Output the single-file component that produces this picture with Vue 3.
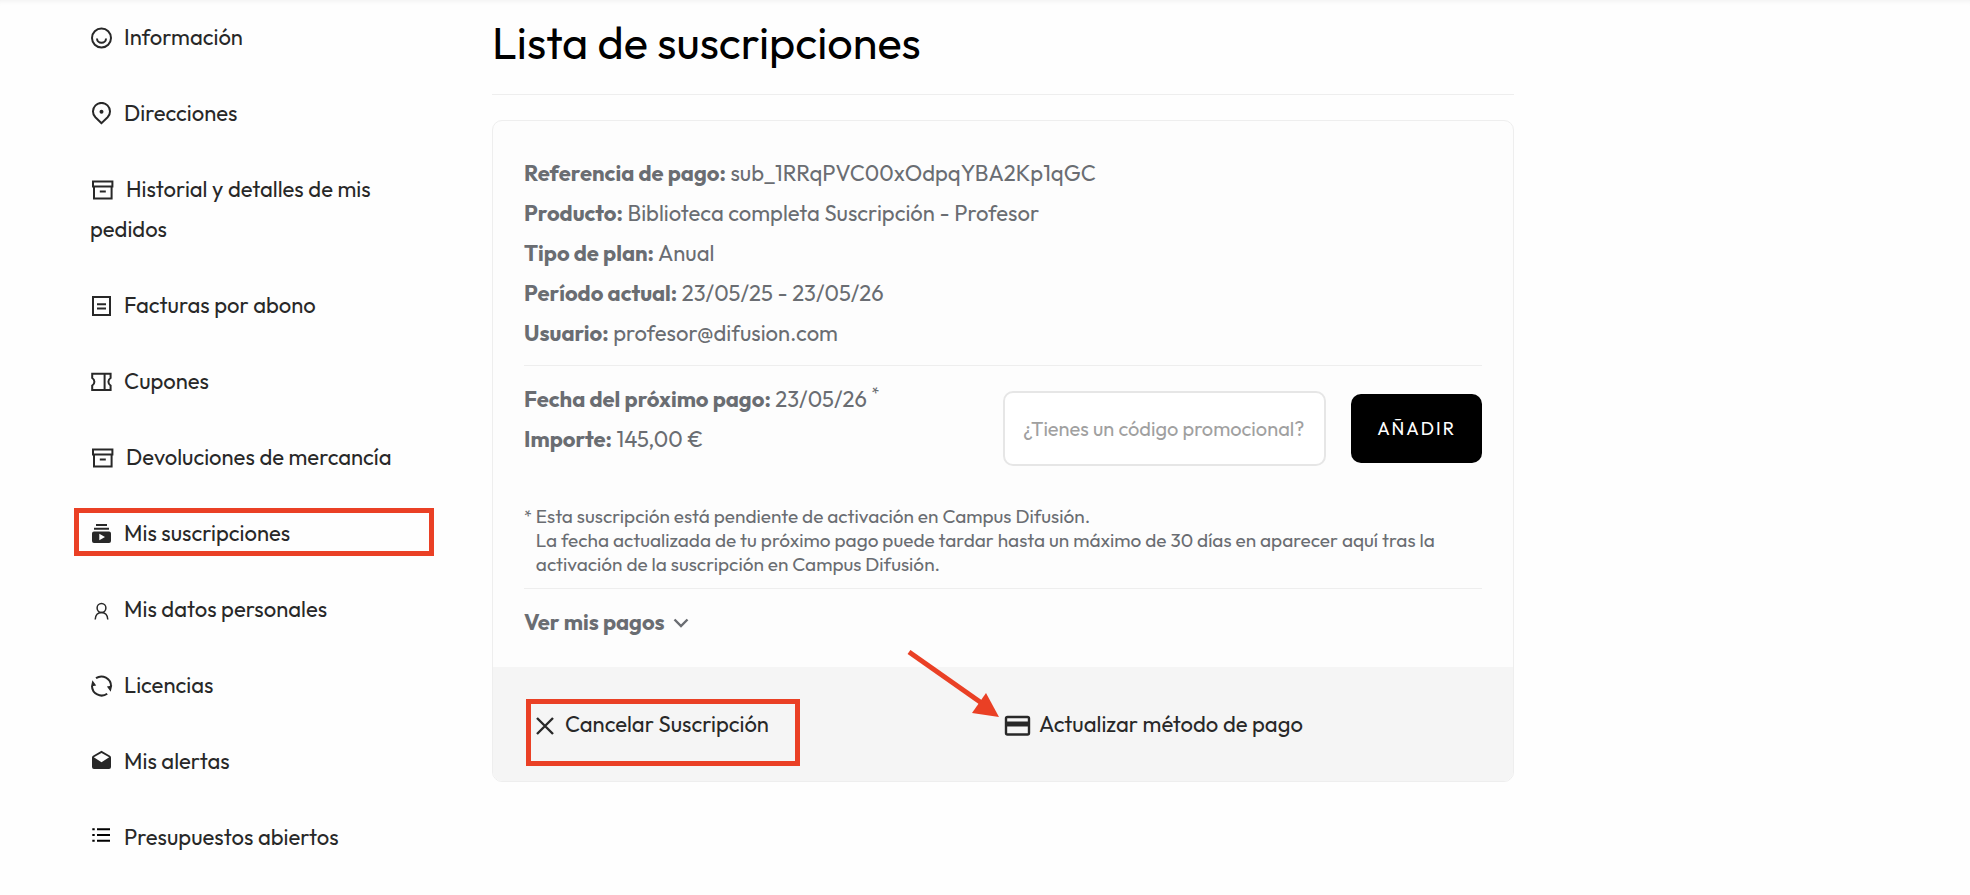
<script setup>
import { ref } from 'vue';

const promoCode = ref('');
const showPayments = ref(false);

const menu = [
  { icon: 'smile', label: 'Información' },
  { icon: 'pin', label: 'Direcciones' },
  { icon: 'box', label: 'Historial y detalles de mis pedidos' },
  { icon: 'invoice', label: 'Facturas por abono' },
  { icon: 'ticket', label: 'Cupones' },
  { icon: 'box', label: 'Devoluciones de mercancía' },
  { icon: 'subscriptions', label: 'Mis suscripciones', active: true },
  { icon: 'person', label: 'Mis datos personales' },
  { icon: 'refresh', label: 'Licencias' },
  { icon: 'mail', label: 'Mis alertas' },
  { icon: 'list', label: 'Presupuestos abiertos' }
];

const details = [
  { name: 'Referencia de pago', value: 'sub_1RRqPVC00xOdpqYBA2Kp1qGC' },
  { name: 'Producto', value: 'Biblioteca completa Suscripción - Profesor' },
  { name: 'Tipo de plan', value: 'Anual' },
  { name: 'Período actual', value: '23/05/25 - 23/05/26' },
  { name: 'Usuario', value: 'profesor@difusion.com' }
];

const addPromo = () => {
  promoCode.value = '';
};
</script>

<template>
  <div class="page">
    <nav class="sidebar" aria-label="Mi cuenta">
      <ul>
        <li v-for="item in menu" :key="item.label" :class="{ active: item.active }">
          <a href="#">
            <svg class="icon" :class="{ wide: item.icon === 'box' }" :viewBox="item.icon === 'box' ? '0 0 26 24' : '0 0 24 24'" fill="none" stroke="currentColor" stroke-width="2" aria-hidden="true">
              <g v-if="item.icon === 'smile'">
                <circle cx="11.5" cy="12" r="9.5" />
                <path d="M7 12.5a4.5 4.2 0 0 0 9 0" />
              </g>
              <g v-else-if="item.icon === 'pin'">
                <path d="M11.5 21.2 5.4 15.3A8.5 8.5 0 1 1 17.6 15.3Z" />
                <circle cx="11.5" cy="9.8" r="2" fill="currentColor" stroke="none" />
              </g>
              <g v-else-if="item.icon === 'box'">
                <path d="M3 3.5h19.4v5H3zM4 8.5v12h17.6v-12M9.8 13.5h6" />
              </g>
              <g v-else-if="item.icon === 'invoice'">
                <path d="M3 3h17v18H3zM7 10.2h9M7 14.4h9" />
              </g>
              <g v-else-if="item.icon === 'ticket'">
                <path d="M2.2 3.7h18.4V8a4.4 4.4 0 0 0 0 7.6v4.3H2.2v-4.3a4.4 4.4 0 0 0 0-7.6zM14.6 3.7v16.2" />
              </g>
              <g v-else-if="item.icon === 'subscriptions'" fill="currentColor" stroke="none">
                <path d="M6 2h11v2H6zM4 5.7h15v2H4z" />
                <path fill-rule="evenodd" d="M4 9.5h15a2 2 0 0 1 2 2V19a2 2 0 0 1-2 2H4a2 2 0 0 1-2-2v-7.5a2 2 0 0 1 2-2zM9.3 11.7v6.6l5.7-3.3z" />
              </g>
              <g v-else-if="item.icon === 'person'" stroke-width="1.5">
                <circle cx="11.5" cy="10" r="4.4" />
                <path d="M5.2 21.5c.3-4.5 2.8-7 6.3-7s6 2.5 6.3 7" />
              </g>
              <g v-else-if="item.icon === 'refresh'">
                <path d="M6 4.2a9.6 9.6 0 0 1 15 8M17.2 19.7A9.6 9.6 0 0 1 2 12" />
                <path fill="currentColor" stroke="none" d="M1 12.5 2.4 6.3 6.2 11.5zM22.2 11.5 20.7 17.7 16.9 12.5z" />
              </g>
              <g v-else-if="item.icon === 'mail'" fill="currentColor" stroke="none">
                <path fill-rule="evenodd" d="M11.5.8 20 5.8a2 2 0 0 1 1 1.7V17a2 2 0 0 1-2 2H4a2 2 0 0 1-2-2V7.5a2 2 0 0 1 1-1.7zM11.5 3 3.8 7.3l7.7 4.9 7.7-4.9z" />
              </g>
              <g v-else class="list-icon">
                <path d="M7 3.2h13M7 9h13M7 14.7h13M2.3 3.2h2.4M2.3 9h2.4M2.3 14.7h2.4" />
              </g>
            </svg>{{ item.label }}
          </a>
        </li>
      </ul>
    </nav>

    <main class="content">
      <h1>Lista de suscripciones</h1>

      <section class="card">
        <div class="card-body">
          <div class="block">
            <p v-for="row in details" :key="row.name"><strong>{{ row.name }}:</strong> {{ row.value }}</p>
          </div>

          <div class="block">
            <div class="columns">
              <div>
                <p><strong>Fecha del próximo pago:</strong> 23/05/26 <sup>*</sup></p>
                <p><strong>Importe:</strong> 145,00 €</p>
              </div>
              <form class="promo" @submit.prevent="addPromo">
                <input v-model.trim="promoCode" type="text" placeholder="¿Tienes un código promocional?" aria-label="¿Tienes un código promocional?" />
                <button type="submit" class="btn-add">AÑADIR</button>
              </form>
            </div>
            <div class="notes">
              <sup>*</sup>
              <div>
                Esta suscripción está pendiente de activación en Campus Difusión.<br />
                La fecha actualizada de tu próximo pago puede tardar hasta un máximo de 30 días en aparecer aquí tras la activación de la suscripción en Campus Difusión.
              </div>
            </div>
          </div>

          <button type="button" class="toggle" :aria-expanded="showPayments" @click="showPayments = !showPayments">
            Ver mis pagos
            <svg width="16" height="16" viewBox="0 0 16 16" fill="none" stroke="currentColor" stroke-width="2.4" aria-hidden="true">
              <path d="m1.5 5.5 6.5 6.5 6.5-6.5" />
            </svg>
          </button>
        </div>

        <div class="card-footer columns">
          <div>
            <a href="#" class="action cancel">
              <svg width="24" height="24" viewBox="0 0 24 24" fill="none" stroke="currentColor" stroke-width="2.4" aria-hidden="true">
                <path d="m4 6 16 16M20 6 4 22" />
              </svg>
              Cancelar Suscripción
            </a>
          </div>
          <div>
            <a href="#" class="action">
              <svg width="28" height="24" viewBox="0 0 28 24" aria-hidden="true">
                <rect x="3" y="5" width="23" height="17.5" rx="1.5" fill="none" stroke="currentColor" stroke-width="2.4" />
                <path d="M3 9.5h23v5H3z" fill="currentColor" />
              </svg>
              Actualizar método de pago
              <svg class="arrow" width="94" height="68" viewBox="0 0 94 68" aria-hidden="true">
                <path d="M2 2 76 54" stroke="#ea4025" stroke-width="5" />
                <path d="M92 67 79 43 65 63z" fill="#ea4025" />
              </svg>
            </a>
          </div>
        </div>
      </section>
    </main>
  </div>
</template>

<style>
body {
  margin: 0;
  background: #fefefe;
}
</style>

<style scoped>
.page {
  display: flex;
  gap: 82px;
  padding: 16px 90px 24px;
  font-family: Outfit, Lato, sans-serif;
  font-size: 22px;
  font-weight: 400;
  line-height: 40px;
  color: #282828;
  box-shadow: inset 0 6px 6px -6px rgba(0, 0, 0, 0.08);
}

.sidebar {
  flex: 0 0 320px;
}

.sidebar ul {
  display: flex;
  flex-direction: column;
  gap: 36px;
  margin: 0;
  padding: 1px 0 0;
  list-style: none;
}

a {
  color: inherit;
  text-decoration: none;
}

.icon {
  width: 24px;
  height: 24px;
  margin-right: 10px;
  vertical-align: -5px;
}

.icon.wide {
  width: 26px;
}

.list-icon {
  color: #000;
}

.active {
  position: relative;
}

/* highlight frames */
.active::after,
.cancel::after {
  content: '';
  position: absolute;
  border: 5px solid #ea4025;
  pointer-events: none;
}

.active::after {
  inset: -5px -24px -3px -16px;
}

.content {
  flex: 1;
  max-width: 1022px;
}

h1 {
  margin: 0 0 25px;
  padding-bottom: 24px;
  border-bottom: 1px solid #eee;
  color: #000;
  font-size: 45px;
  font-weight: 400;
  line-height: 54px;
}

.card {
  border: 1px solid #eee;
  border-radius: 10px;
  background: #fdfdfd;
  color: #6a6d72;
}

.card-body {
  padding: 32px 31px 25px;
}

.block {
  margin-bottom: 13px;
  padding-bottom: 12px;
  border-bottom: 1px solid #eee;
}

p {
  margin: 0;
}

strong {
  font-weight: 700;
}

sup {
  font-size: 16px;
  line-height: 0;
}

.columns {
  display: grid;
  grid-template-columns: repeat(2, minmax(0, 1fr));
}

.promo {
  display: flex;
  align-items: center;
  gap: 25px;
  margin-top: 12px;
}

.promo input {
  flex: 1;
  min-width: 0;
  height: 75px;
  box-sizing: border-box;
  padding: 0 18px;
  border: 2px solid #e6e6e6;
  border-radius: 10px;
  background: #fff;
  color: #282828;
  font: inherit;
  font-size: 20px;
}

.promo input::placeholder {
  color: #a0a0a0;
}

.btn-add {
  height: 69px;
  padding: 0 26px;
  border: none;
  border-radius: 10px;
  background: #000;
  color: #fff;
  font: inherit;
  font-size: 18px;
  letter-spacing: 2px;
  cursor: pointer;
}

.notes {
  display: flex;
  gap: 4px;
  margin-top: 38px;
  font-size: 19px;
  line-height: 24px;
}

.notes sup {
  line-height: 24px;
}

.toggle {
  display: flex;
  align-items: center;
  gap: 8px;
  padding: 0;
  border: none;
  background: none;
  color: inherit;
  font: inherit;
  font-weight: 700;
  cursor: pointer;
}

.card-footer {
  padding: 37px 31px;
  border-radius: 0 0 9px 9px;
  background: #f5f5f5;
  color: #282828;
}

.action {
  position: relative;
  display: flex;
  align-items: center;
  gap: 8px;
  width: fit-content;
}

.cancel {
  padding-left: 9px;
}

.cancel::after {
  inset: -5px -31px -22px 2px;
}

.arrow {
  position: absolute;
  left: -96px;
  bottom: 26px;
}
</style>
